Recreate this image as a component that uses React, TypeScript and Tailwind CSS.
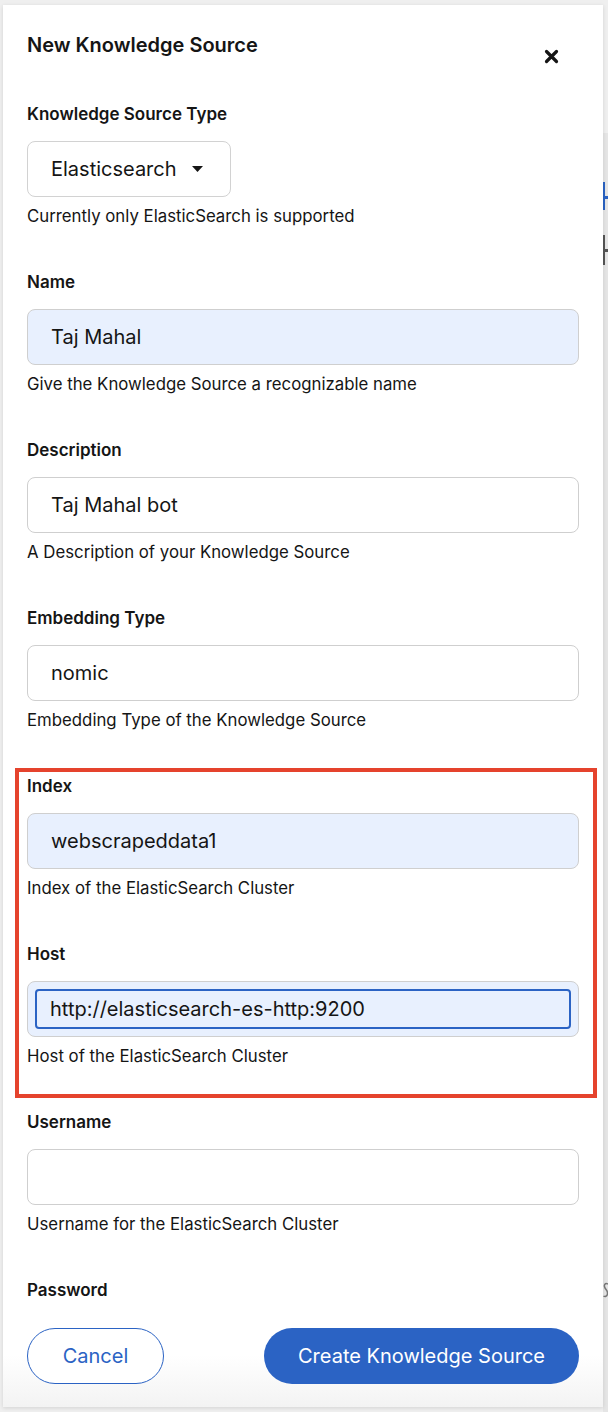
type Field = {
  label: string;
  value?: string;
  helper: string;
  autofill?: boolean;
  focused?: boolean;
};

const topFields: Field[] = [
  { label: "Name", value: "Taj Mahal", helper: "Give the Knowledge Source a recognizable name", autofill: true },
  { label: "Description", value: "Taj Mahal bot", helper: "A Description of your Knowledge Source" },
  { label: "Embedding Type", value: "nomic", helper: "Embedding Type of the Knowledge Source" },
];

const boxedFields: Field[] = [
  { label: "Index", value: "webscrapeddata1", helper: "Index of the ElasticSearch Cluster", autofill: true },
  { label: "Host", value: "http://elasticsearch-es-http:9200", helper: "Host of the ElasticSearch Cluster", autofill: true, focused: true },
];

const bottomFields: Field[] = [
  { label: "Username", value: "", helper: "Username for the ElasticSearch Cluster" },
];

const CloseIcon = () => (
  <svg width="15" height="15" viewBox="0 0 15 15" className="mt-[18px] mr-[20px] shrink-0">
    <path d="M2.5 2.5 L12.5 12.5 M12.5 2.5 L2.5 12.5" stroke="#151515" strokeWidth="3.2" strokeLinecap="round" />
  </svg>
);

const FormField = ({ field }: { field: Field }) => {
  const bg = field.autofill ? "bg-[#e8f0fe]" : "bg-white";
  return (
    <div className="flex flex-col">
      <div className="text-[17px] leading-[24px] font-semibold">{field.label}</div>
      {field.focused ? (
        <div className={`mt-[15px] h-[56px] rounded-[8px] border border-[#cfcfcf] p-[7px] ${bg}`}>
          <div className="flex h-full items-center rounded-[4px] border-2 border-[#2b63c4] pl-[13px] text-[20px]">
            {field.value}
          </div>
        </div>
      ) : (
        <div className={`mt-[15px] flex h-[56px] items-center rounded-[8px] border border-[#cfcfcf] pl-[23px] text-[20px] ${bg}`}>
          {field.value}
        </div>
      )}
      <div className="mt-[7px] text-[16.8px] leading-[24px]">{field.helper}</div>
    </div>
  );
};

export default function App() {
  return (
    <div className="relative h-[1412px] w-[608px] overflow-hidden bg-[#efefef] font-['Inter',sans-serif] text-[#151515]">
      {/* bits of the page behind the modal */}
      <div className="absolute top-[133px] right-0 h-[1279px] w-[5px] bg-[#e5e5e5]" />
      <div className="absolute top-[182px] left-[603px] h-[28px] w-[2px] bg-[#2b63c4]" />
      <div className="absolute top-[196px] left-[603px] h-[3px] w-[5px] bg-[#2b63c4]" />
      <div className="absolute top-[235px] left-[603px] h-[30px] w-[2px] bg-[#555]" />
      <div className="absolute top-[249px] left-[603px] h-[3px] w-[5px] bg-[#555]" />
      <svg width="5" height="16" viewBox="0 0 5 16" className="absolute top-[1282px] left-[603px]">
        <path d="M5 2 C2 0.5 0.5 3 2 6 C3.5 8.5 5 9 4.5 12 C4 14.5 2 15 0.5 14" stroke="#777" strokeWidth="1.5" fill="none" />
      </svg>

      <div className="absolute top-[5px] left-[3px] flex h-[1402px] w-[600px] flex-col bg-white shadow-[0_1px_4px_rgba(0,0,0,0.12)]">
        <div className="min-h-0 flex-1 overflow-hidden px-6 pt-[26px]">
          <div className="flex items-start justify-between">
            <div className="text-[20px] leading-[28px] font-semibold">New Knowledge Source</div>
            <CloseIcon />
          </div>

          <div className="mt-[38px] flex flex-col gap-[42px]">
            <div className="flex flex-col">
              <div className="text-[17px] leading-[24px] font-semibold">Knowledge Source Type</div>
              <div className="mt-[15px] flex h-[56px] w-[204px] items-center rounded-[8px] border border-[#d2d2d2] pl-[23px] text-[20px]">
                Elasticsearch
                <svg width="11" height="6" viewBox="0 0 11 6" className="ml-[15px]">
                  <path d="M0 0 H11 L5.5 6 Z" fill="#151515" />
                </svg>
              </div>
              <div className="mt-[7px] text-[16.8px] leading-[24px]">Currently only ElasticSearch is supported</div>
            </div>

            {topFields.map((f) => (
              <FormField key={f.label} field={f} />
            ))}

            <div className="relative flex flex-col gap-[42px]">
              <div className="pointer-events-none absolute -top-[6px] -right-[18px] -bottom-[30px] -left-[12px] border-4 border-[#e5432d]" />
              {boxedFields.map((f) => (
                <FormField key={f.label} field={f} />
              ))}
            </div>

            {bottomFields.map((f) => (
              <FormField key={f.label} field={f} />
            ))}

            <div className="text-[17px] leading-[24px] font-semibold">Password</div>
          </div>
        </div>

        <div className="flex justify-between bg-gradient-to-b from-white via-white to-[#f3f3f3] px-6 pt-[24px] pb-[23px]">
          <button className="h-[56px] w-[137px] rounded-full border border-[#2b63c4] bg-white text-[20px] text-[#2b63c4]">
            Cancel
          </button>
          <button className="h-[56px] w-[315px] rounded-full bg-[#2b63c4] text-[20px] text-white">
            Create Knowledge Source
          </button>
        </div>
      </div>
    </div>
  );
}
